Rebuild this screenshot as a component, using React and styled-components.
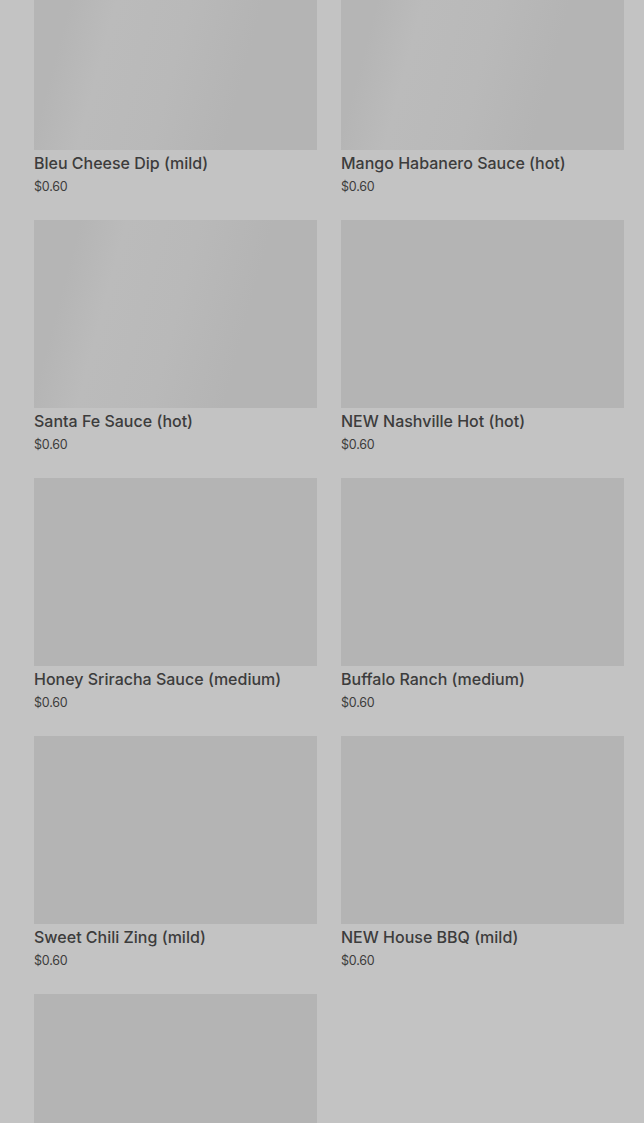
import React from 'react';
import styled, { createGlobalStyle, css } from 'styled-components';

const GlobalStyle = createGlobalStyle`
    html, body {
        margin: 0;
        padding: 0;
        background: #c3c3c3;
        font-family: Inter, "Noto Sans", sans-serif;
        overflow: hidden;
    }
`;

const Page = styled.div`
    width: 644px;
    height: 1123px;
    overflow: hidden;
    background: #c3c3c3;
`;

const Grid = styled.div`
    display: grid;
    grid-template-columns: 283px 283px;
    column-gap: 24px;
    row-gap: 23px;
    padding: 0 20px 0 34px;
    margin-top: -38px;
`;

const Card = styled.div`
    display: flex;
    flex-direction: column;
`;

const Thumb = styled.div`
    height: 188px;
    background: #b4b4b4;
    ${p => p.$shimmer && css`
        background: linear-gradient(
            105deg,
            #b5b5b5 0%,
            #b5b5b5 14%,
            #bbbbbb 28%,
            #b9b9b9 50%,
            #b4b4b4 72%,
            #b4b4b4 100%
        );
    `}
`;

const Title = styled.div`
    margin-top: 2px;
    font-size: 16px;
    line-height: 22px;
    font-weight: 500;
    color: #3c3c3c;
    letter-spacing: 0;
`;

const Price = styled.div`
    margin-top: 3px;
    font-size: 12.5px;
    line-height: 20px;
    color: #3c3c3c;
    letter-spacing: -0.2px;
`;

const items = [
    { name: 'Bleu Cheese Dip (mild)', shimmer: true },
    { name: 'Mango Habanero Sauce (hot)', shimmer: true },
    { name: 'Santa Fe Sauce (hot)', shimmer: true },
    { name: 'NEW Nashville Hot (hot)' },
    { name: 'Honey Sriracha Sauce (medium)' },
    { name: 'Buffalo Ranch (medium)' },
    { name: 'Sweet Chili Zing (mild)' },
    { name: 'NEW House BBQ (mild)' },
    { name: null },
];

const App = () => (
    <Page>
        <GlobalStyle />
        <Grid>
            {items.map((item, i) => (
                <Card key={i}>
                    <Thumb $shimmer={item.shimmer} />
                    {item.name && <Title>{item.name}</Title>}
                    {item.name && <Price>$0.60</Price>}
                </Card>
            ))}
        </Grid>
    </Page>
);

export default App;
